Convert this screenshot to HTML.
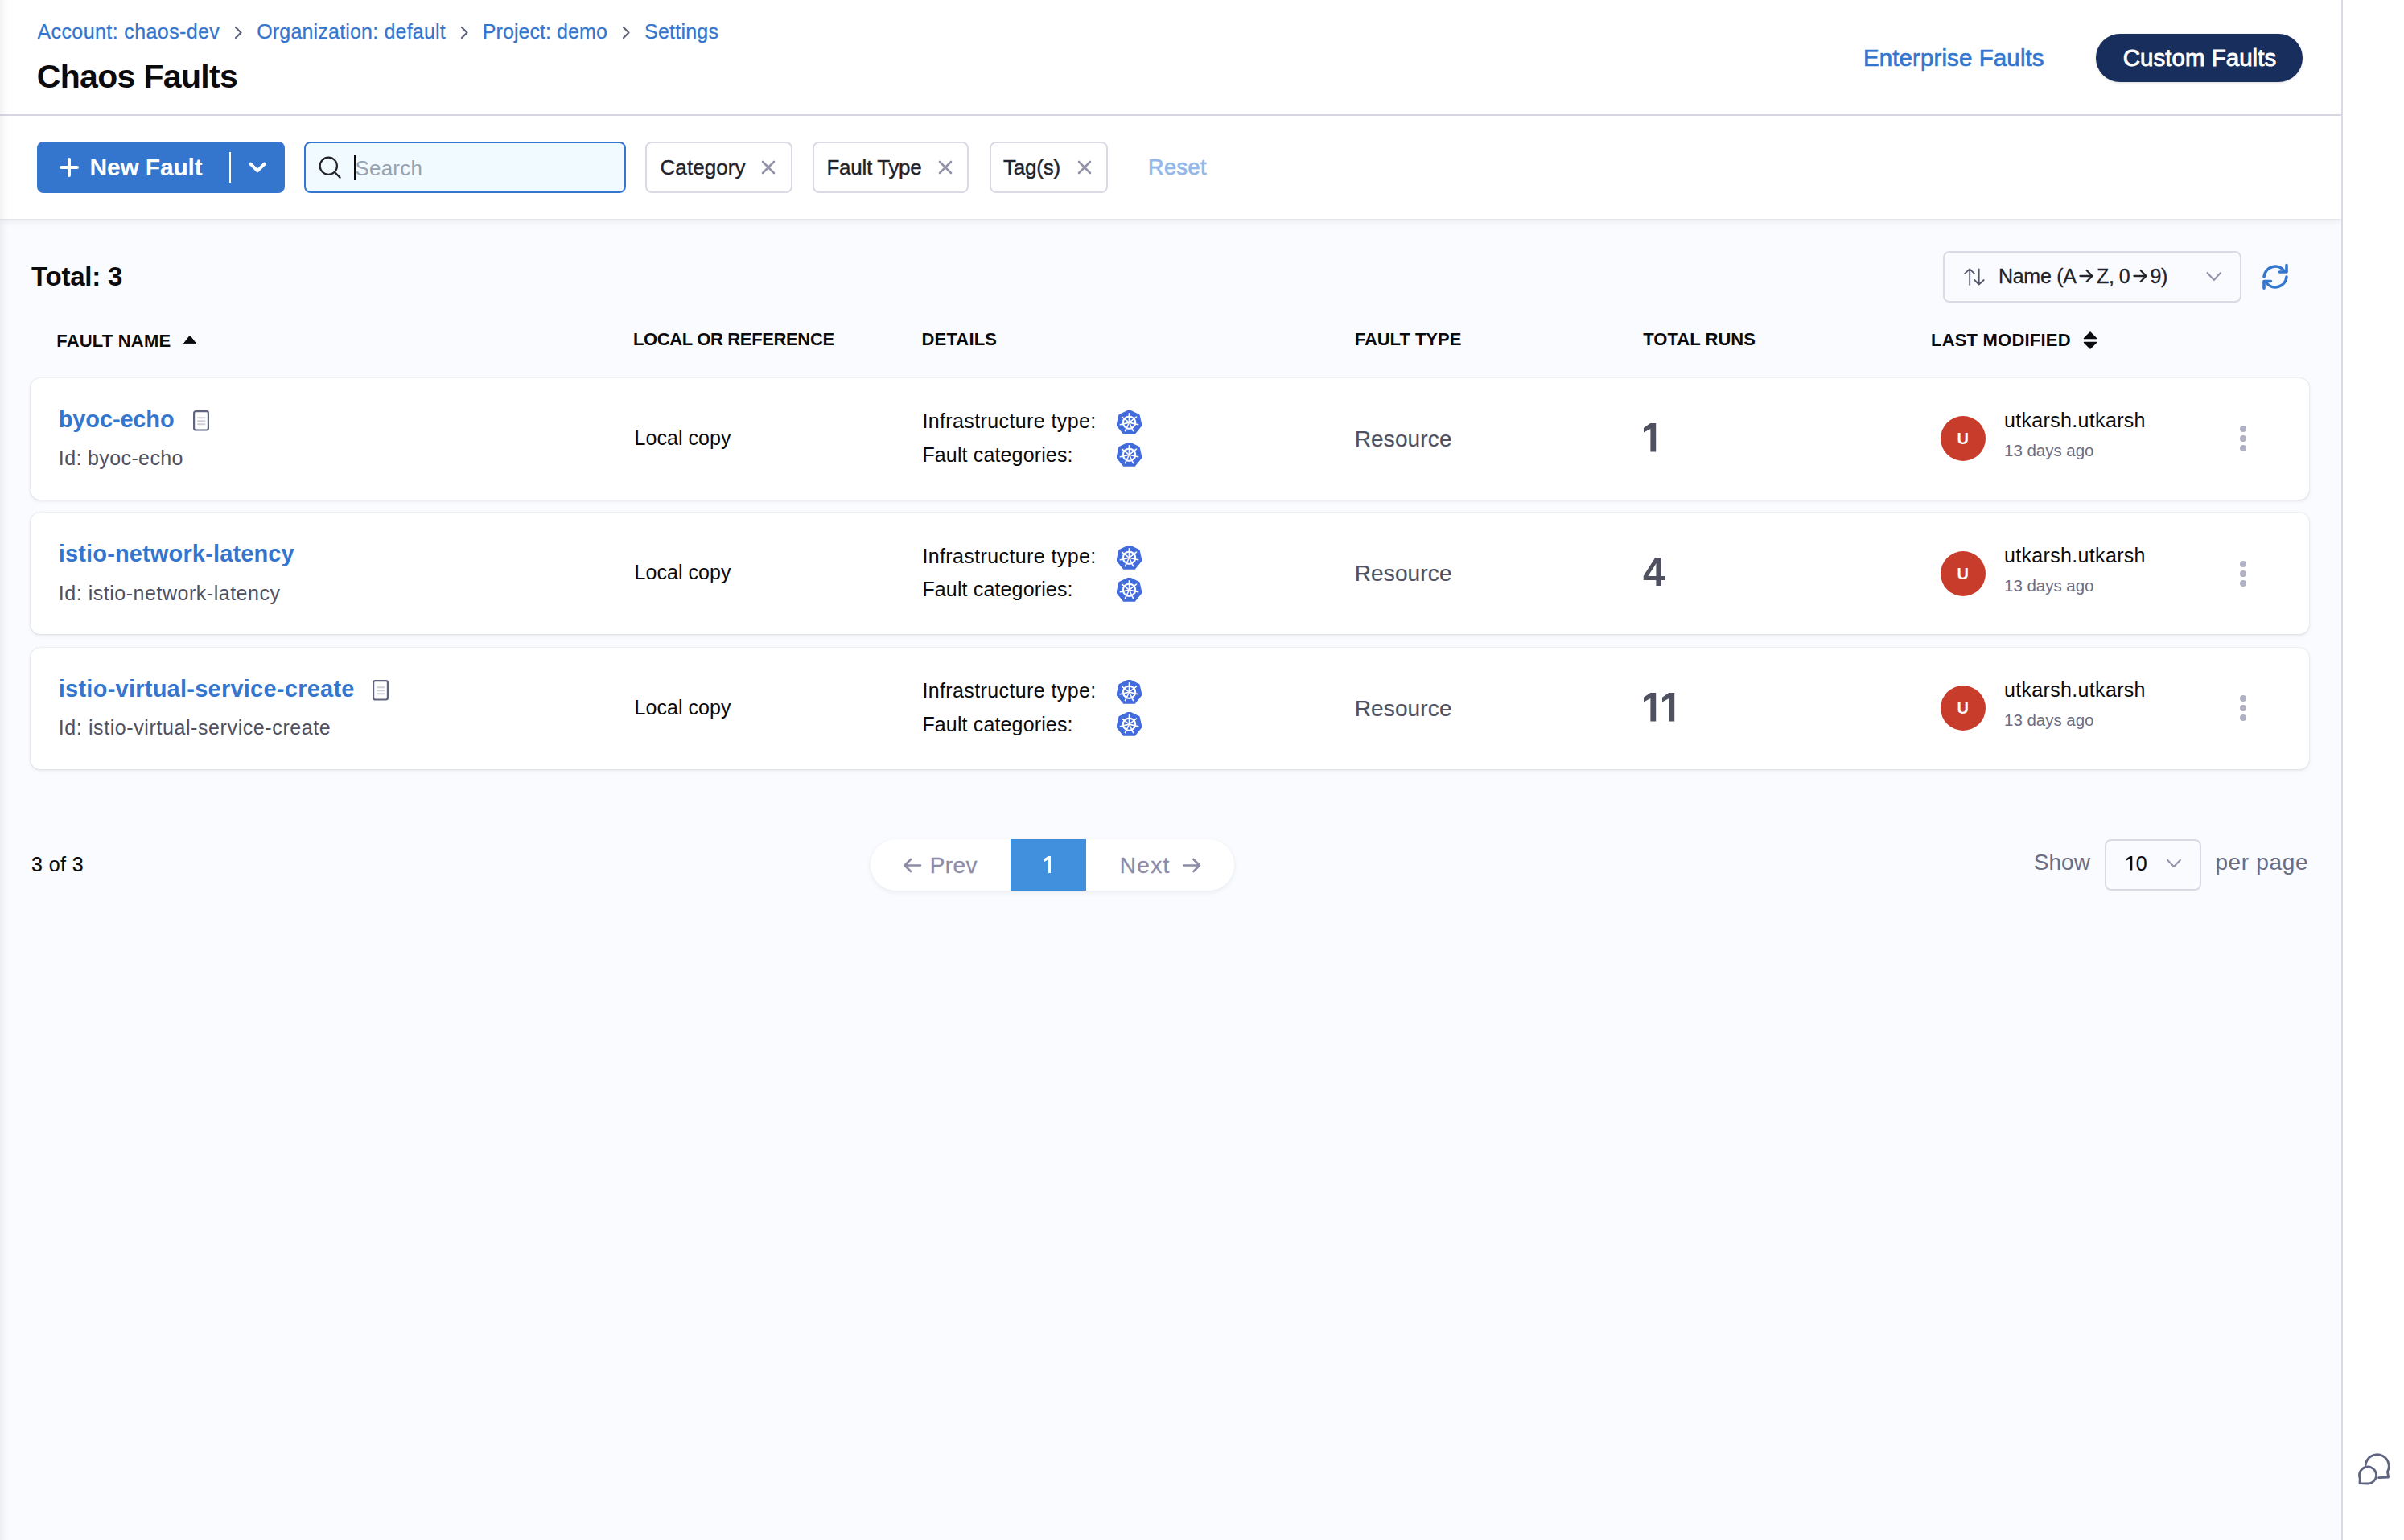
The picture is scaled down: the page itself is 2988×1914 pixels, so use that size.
<!DOCTYPE html>
<html><head><meta charset="utf-8"><title>Chaos Faults</title>
<style>
html,body{margin:0;padding:0;}
body{width:2988px;height:1914px;position:relative;overflow:hidden;background:#f9fbfe;font-family:"Liberation Sans",sans-serif;}
.t{position:absolute;white-space:nowrap;}
</style></head><body>
<div style="position:absolute;left:0px;top:0px;width:2910px;height:144px;background:#fff;"></div>
<div style="position:absolute;left:0px;top:142px;width:2910px;height:2px;background:#d9dae4;"></div>
<div style="position:absolute;left:0px;top:144px;width:2910px;height:128px;background:#fff;box-shadow:0 1px 2px rgba(40,41,60,0.07),0 3px 8px rgba(40,41,60,0.08);z-index:1;"></div>
<div style="position:absolute;left:2910px;top:0px;width:2px;height:1914px;background:#d9dae4;z-index:3;"></div>
<div style="position:absolute;left:2912px;top:0px;width:76px;height:1914px;background:#fff;z-index:3;"></div>
<div style="position:absolute;left:0px;top:0px;width:12px;height:1914px;background:linear-gradient(to right,rgba(40,41,60,0.06),rgba(40,41,60,0.02) 50%,rgba(40,41,60,0));z-index:4;"></div>
<div class="t" style="left:46.50px;top:26.63px;font-size:25px;line-height:25px;color:#3476ce;letter-spacing:0.400px;-webkit-text-stroke:0.25px #3476ce;">Account: chaos-dev</div>
<div class="t" style="left:319.20px;top:26.63px;font-size:25px;line-height:25px;color:#3476ce;letter-spacing:0.190px;-webkit-text-stroke:0.25px #3476ce;">Organization: default</div>
<div class="t" style="left:599.80px;top:26.63px;font-size:25px;line-height:25px;color:#3476ce;letter-spacing:0.067px;-webkit-text-stroke:0.25px #3476ce;">Project: demo</div>
<div class="t" style="left:801.00px;top:26.63px;font-size:25px;line-height:25px;color:#3476ce;letter-spacing:0.229px;-webkit-text-stroke:0.25px #3476ce;">Settings</div>
<svg style="position:absolute;left:289.5px;top:30px;" width="16" height="20" viewBox="0 0 16 20"><path d="M3 4 L9.5 10.5 L3 17" fill="none" stroke="#60647a" stroke-width="2.3" stroke-linecap="round" stroke-linejoin="round"/></svg>
<svg style="position:absolute;left:570.5px;top:30px;" width="16" height="20" viewBox="0 0 16 20"><path d="M3 4 L9.5 10.5 L3 17" fill="none" stroke="#60647a" stroke-width="2.3" stroke-linecap="round" stroke-linejoin="round"/></svg>
<svg style="position:absolute;left:771.5px;top:30px;" width="16" height="20" viewBox="0 0 16 20"><path d="M3 4 L9.5 10.5 L3 17" fill="none" stroke="#60647a" stroke-width="2.3" stroke-linecap="round" stroke-linejoin="round"/></svg>
<div class="t" style="left:45.80px;top:75.28px;font-size:41px;line-height:41px;color:#0b0b0d;font-weight:700;letter-spacing:-0.673px;">Chaos Faults</div>
<div class="t" style="left:2316.00px;top:57.32px;font-size:29.5px;line-height:29.5px;color:#3476ce;letter-spacing:0.100px;-webkit-text-stroke:0.7px #3476ce;">Enterprise Faults</div>
<div style="position:absolute;left:2605px;top:42px;width:257px;height:60px;background:#182f5d;border-radius:30px;box-shadow:0 1px 3px rgba(0,0,0,0.15);"></div>
<div class="t" style="left:2638.70px;top:57.32px;font-size:29.5px;line-height:29.5px;color:#ffffff;letter-spacing:0.025px;-webkit-text-stroke:0.9px #ffffff;">Custom Faults</div>
<div style="position:absolute;left:46px;top:176px;width:308px;height:64px;background:#3476ce;border-radius:8px;z-index:2;"></div>
<svg style="position:absolute;left:70px;top:192px;z-index:2;" width="32" height="32" viewBox="0 0 32 32"><path d="M16 6 V26 M6 16 H26" stroke="#fff" stroke-width="4" stroke-linecap="round"/></svg>
<div class="t" style="left:111.60px;top:192.90px;font-size:30px;line-height:30px;color:#ffffff;font-weight:700;letter-spacing:-0.200px;z-index:2;">New Fault</div>
<div style="position:absolute;left:285px;top:189px;width:2px;height:38px;background:#fff;z-index:2;"></div>
<svg style="position:absolute;left:306px;top:198px;z-index:2;" width="28" height="20" viewBox="0 0 28 20"><path d="M5.4 5.7 L13.9 14.2 L22.7 5.7" fill="none" stroke="#fff" stroke-width="4" stroke-linecap="round" stroke-linejoin="round"/></svg>
<div style="position:absolute;left:378px;top:176px;width:400px;height:64px;box-sizing:border-box;border:2px solid #3476ce;background:#f1fafe;border-radius:8px;z-index:2;"></div>
<svg style="position:absolute;left:390px;top:188px;z-index:2;" width="40" height="40" viewBox="0 0 40 40"><circle cx="18.3" cy="18.2" r="10.6" fill="none" stroke="#22222a" stroke-width="2.2"/><path d="M26.3 26.3 L32.6 32.6" stroke="#22222a" stroke-width="2.2" stroke-linecap="round"/></svg>
<div style="position:absolute;left:439.8px;top:193px;width:2.3000000000000114px;height:31px;background:#0b0b0d;z-index:2;"></div>
<div class="t" style="left:441.50px;top:196.28px;font-size:26px;line-height:26px;color:#98a3b0;letter-spacing:0.200px;z-index:2;">Search</div>
<div style="position:absolute;left:802px;top:176px;width:183px;height:64px;box-sizing:border-box;border:2px solid #d9dae4;background:#fff;border-radius:8px;z-index:2;"></div>
<div class="t" style="left:820.50px;top:195.28px;font-size:26px;line-height:26px;color:#22222a;letter-spacing:0.071px;-webkit-text-stroke:0.4px #22222a;z-index:2;">Category</div>
<svg style="position:absolute;left:945px;top:198px;z-index:2;" width="20" height="20" viewBox="0 0 20 20"><path d="M3 3 L17 17 M17 3 L3 17" stroke="#9293a9" stroke-width="2.6" stroke-linecap="round"/></svg>
<div style="position:absolute;left:1010px;top:176px;width:194px;height:64px;box-sizing:border-box;border:2px solid #d9dae4;background:#fff;border-radius:8px;z-index:2;"></div>
<div class="t" style="left:1027.50px;top:195.28px;font-size:26px;line-height:26px;color:#22222a;letter-spacing:-0.300px;-webkit-text-stroke:0.4px #22222a;z-index:2;">Fault Type</div>
<svg style="position:absolute;left:1165px;top:198px;z-index:2;" width="20" height="20" viewBox="0 0 20 20"><path d="M3 3 L17 17 M17 3 L3 17" stroke="#9293a9" stroke-width="2.6" stroke-linecap="round"/></svg>
<div style="position:absolute;left:1230px;top:176px;width:147px;height:64px;box-sizing:border-box;border:2px solid #d9dae4;background:#fff;border-radius:8px;z-index:2;"></div>
<div class="t" style="left:1247.00px;top:195.28px;font-size:26px;line-height:26px;color:#22222a;letter-spacing:-0.200px;-webkit-text-stroke:0.4px #22222a;z-index:2;">Tag(s)</div>
<svg style="position:absolute;left:1338px;top:198px;z-index:2;" width="20" height="20" viewBox="0 0 20 20"><path d="M3 3 L17 17 M17 3 L3 17" stroke="#9293a9" stroke-width="2.6" stroke-linecap="round"/></svg>
<div class="t" style="left:1427.00px;top:195.34px;font-size:27px;line-height:27px;color:#92b7e8;letter-spacing:0.500px;-webkit-text-stroke:0.7px #92b7e8;z-index:2;">Reset</div>
<div style="position:absolute;left:0px;top:272px;width:2910px;height:1642px;background:#f9fbfe;"></div>
<div class="t" style="left:39.00px;top:327.26px;font-size:33px;line-height:33px;color:#0b0b0d;font-weight:700;letter-spacing:-0.214px;">Total: 3</div>
<div style="position:absolute;left:2415px;top:312px;width:371px;height:64px;box-sizing:border-box;border:2px solid #d9dae4;background:#f9fbfe;border-radius:8px;"></div>
<svg style="position:absolute;left:2436px;top:328px;" width="36" height="32" viewBox="0 0 36 32"><path d="M12.2 26 V6.3 M6.2 11.8 L12.2 6.3 L17.9 11.8 M23.7 6.3 V25.5 M18.2 20 L23.7 25.5 L29.7 20" fill="none" stroke="#55586b" stroke-width="1.8" stroke-linecap="round" stroke-linejoin="round"/></svg>
<div class="t" style="left:2484.00px;top:330.83px;font-size:25px;line-height:25px;color:#22222a;letter-spacing:-0.300px;-webkit-text-stroke:0.3px #22222a;">Name (A</div>
<div class="t" style="left:2606.10px;top:330.83px;font-size:25px;line-height:25px;color:#22222a;letter-spacing:-0.467px;-webkit-text-stroke:0.3px #22222a;">Z, 0</div>
<div class="t" style="left:2672.60px;top:330.83px;font-size:25px;line-height:25px;color:#22222a;letter-spacing:-0.500px;-webkit-text-stroke:0.3px #22222a;">9)</div>
<svg style="position:absolute;left:2583px;top:333px;" width="22" height="20" viewBox="0 0 22 20"><path d="M2.5 10 H17.5 M10.6 3 L17.5 10 L10.6 17" fill="none" stroke="#22222a" stroke-width="2.3" stroke-linecap="round" stroke-linejoin="round"/></svg>
<svg style="position:absolute;left:2649.6px;top:333px;" width="22" height="20" viewBox="0 0 22 20"><path d="M2.5 10 H17.5 M10.6 3 L17.5 10 L10.6 17" fill="none" stroke="#22222a" stroke-width="2.3" stroke-linecap="round" stroke-linejoin="round"/></svg>
<svg style="position:absolute;left:2738px;top:332px;" width="28" height="24" viewBox="0 0 28 24"><path d="M5.5 7 L13.8 16 L22 7" fill="none" stroke="#9293a9" stroke-width="2" stroke-linecap="round" stroke-linejoin="round"/></svg>
<svg style="position:absolute;left:2800px;top:315px;" width="60" height="60" viewBox="0 0 60 60"><path d="M14 29 A14 14 0 0 1 39 21.5" fill="none" stroke="#3476ce" stroke-width="3.6" stroke-linecap="round"/><path d="M42 14.5 V23 H33.6" fill="none" stroke="#3476ce" stroke-width="3.6" stroke-linecap="round" stroke-linejoin="round"/><path d="M42 29 A14 14 0 0 1 17 36.5" fill="none" stroke="#3476ce" stroke-width="3.6" stroke-linecap="round"/><path d="M14 43.2 V34.5 H22.5" fill="none" stroke="#3476ce" stroke-width="3.6" stroke-linecap="round" stroke-linejoin="round"/></svg>
<div class="t" style="left:70.30px;top:412.77px;font-size:22px;line-height:22px;color:#0b0b0d;font-weight:700;letter-spacing:0.189px;">FAULT NAME</div>
<svg style="position:absolute;left:226px;top:414px;" width="20" height="16" viewBox="0 0 20 16"><path d="M2.5 12.8 L10 3 L17.5 12.8 Z" fill="#0b0b0d" stroke="#0b0b0d" stroke-width="1" stroke-linejoin="round"/></svg>
<div class="t" style="left:787.00px;top:411.37px;font-size:22px;line-height:22px;color:#0b0b0d;font-weight:700;letter-spacing:-0.365px;">LOCAL OR REFERENCE</div>
<div class="t" style="left:1145.50px;top:411.37px;font-size:22px;line-height:22px;color:#0b0b0d;font-weight:700;letter-spacing:0.167px;">DETAILS</div>
<div class="t" style="left:1683.70px;top:410.87px;font-size:22px;line-height:22px;color:#0b0b0d;font-weight:700;letter-spacing:-0.022px;">FAULT TYPE</div>
<div class="t" style="left:2042.30px;top:410.87px;font-size:22px;line-height:22px;color:#0b0b0d;font-weight:700;letter-spacing:0.033px;">TOTAL RUNS</div>
<div class="t" style="left:2400.00px;top:412.37px;font-size:22px;line-height:22px;color:#0b0b0d;font-weight:700;letter-spacing:0.208px;">LAST MODIFIED</div>
<svg style="position:absolute;left:2586px;top:410px;" width="24" height="26" viewBox="0 0 24 26"><path d="M4.5 10.5 L12 3 L19.5 10.5 Z M4.5 15.5 L12 23 L19.5 15.5 Z" fill="#0b0b0d" stroke="#0b0b0d" stroke-width="1.5" stroke-linejoin="round"/></svg>
<div style="position:absolute;left:37.5px;top:469.8px;width:2832.0px;height:151.2px;background:#fff;border-radius:12px;box-shadow:0 0 1.5px rgba(40,41,61,0.22),0 2px 4px rgba(96,97,112,0.12);"></div>
<div class="t" style="left:72.80px;top:506.94px;font-size:29px;line-height:29px;color:#3476ce;font-weight:700;letter-spacing:-0.150px;">byoc-echo</div>
<svg style="position:absolute;left:239px;top:509px;" width="22" height="28" viewBox="0 0 22 28"><rect x="2.1" y="2.1" width="17.8" height="23.4" rx="2.2" fill="#fff" stroke="#60647e" stroke-width="2.2"/><path d="M7 10.3 H15.5 M7 14.3 H15.5 M7 18.3 H15.5" stroke="#cdced6" stroke-width="1.9" stroke-linecap="round"/></svg>
<div class="t" style="left:72.80px;top:557.33px;font-size:25px;line-height:25px;color:#4f5161;letter-spacing:0.383px;">Id: byoc-echo</div>
<div class="t" style="left:788.50px;top:531.63px;font-size:25px;line-height:25px;color:#0b0b0d;letter-spacing:0.056px;">Local copy</div>
<div class="t" style="left:1146.40px;top:511.23px;font-size:25px;line-height:25px;color:#0b0b0d;letter-spacing:0.389px;">Infrastructure type:</div>
<div class="t" style="left:1146.40px;top:552.63px;font-size:25px;line-height:25px;color:#0b0b0d;letter-spacing:0.144px;">Fault categories:</div>
<svg style="position:absolute;left:1387.5px;top:510px;" width="31" height="31" viewBox="0 0 31 31"><polygon points="15.50,0.11 27.54,5.79 30.51,18.56 22.18,28.80 8.82,28.80 0.49,18.56 3.46,5.79" fill="#426bdc" stroke="#426bdc" stroke-width="2" stroke-linejoin="round"/><circle cx="15.5" cy="15.2" r="7.6" fill="none" stroke="#fff" stroke-width="2.2"/><path d="M15.50 13.20 L15.50 3.70" stroke="#fff" stroke-width="1.6" stroke-linecap="round"/><path d="M17.06 13.95 L24.49 8.03" stroke="#fff" stroke-width="1.6" stroke-linecap="round"/><path d="M17.45 15.65 L26.71 17.76" stroke="#fff" stroke-width="1.6" stroke-linecap="round"/><path d="M16.37 17.00 L20.49 25.56" stroke="#fff" stroke-width="1.6" stroke-linecap="round"/><path d="M14.63 17.00 L10.51 25.56" stroke="#fff" stroke-width="1.6" stroke-linecap="round"/><path d="M13.55 15.65 L4.29 17.76" stroke="#fff" stroke-width="1.6" stroke-linecap="round"/><path d="M13.94 13.95 L6.51 8.03" stroke="#fff" stroke-width="1.6" stroke-linecap="round"/><circle cx="15.5" cy="15.2" r="1.6" fill="#fff"/></svg>
<svg style="position:absolute;left:1387.5px;top:550px;" width="31" height="31" viewBox="0 0 31 31"><polygon points="15.50,0.11 27.54,5.79 30.51,18.56 22.18,28.80 8.82,28.80 0.49,18.56 3.46,5.79" fill="#426bdc" stroke="#426bdc" stroke-width="2" stroke-linejoin="round"/><circle cx="15.5" cy="15.2" r="7.6" fill="none" stroke="#fff" stroke-width="2.2"/><path d="M15.50 13.20 L15.50 3.70" stroke="#fff" stroke-width="1.6" stroke-linecap="round"/><path d="M17.06 13.95 L24.49 8.03" stroke="#fff" stroke-width="1.6" stroke-linecap="round"/><path d="M17.45 15.65 L26.71 17.76" stroke="#fff" stroke-width="1.6" stroke-linecap="round"/><path d="M16.37 17.00 L20.49 25.56" stroke="#fff" stroke-width="1.6" stroke-linecap="round"/><path d="M14.63 17.00 L10.51 25.56" stroke="#fff" stroke-width="1.6" stroke-linecap="round"/><path d="M13.55 15.65 L4.29 17.76" stroke="#fff" stroke-width="1.6" stroke-linecap="round"/><path d="M13.94 13.95 L6.51 8.03" stroke="#fff" stroke-width="1.6" stroke-linecap="round"/><circle cx="15.5" cy="15.2" r="1.6" fill="#fff"/></svg>
<div class="t" style="left:1683.70px;top:531.69px;font-size:28px;line-height:28px;color:#4f5161;letter-spacing:0.143px;-webkit-text-stroke:0.2px #4f5161;">Resource</div>
<svg style="position:absolute;left:2042.7px;top:526.4px;" width="17" height="37" viewBox="0 0 17 37"><polygon points="0,5.8 8.2,0 15.2,0 15.2,35.4 8.4,35.4 8.4,6.9 0,11.5" fill="#4f5161"/></svg>
<div style="position:absolute;left:2412px;top:517px;width:56px;height:56px;background:#c83c2c;border-radius:50%;"></div>
<div class="t" style="left:2432.50px;top:535.36px;font-size:20px;line-height:20px;color:#fff;font-weight:700;">U</div>
<div class="t" style="left:2491.00px;top:510.03px;font-size:25px;line-height:25px;color:#0b0b0d;letter-spacing:0.329px;">utkarsh.utkarsh</div>
<div class="t" style="left:2491.00px;top:550.44px;font-size:20.5px;line-height:20.5px;color:#6b6d83;letter-spacing:-0.020px;">13 days ago</div>
<div style="position:absolute;left:2784px;top:529px;width:8px;height:8px;background:#b0b1c2;border-radius:50%;"></div>
<div style="position:absolute;left:2784px;top:541px;width:8px;height:8px;background:#b0b1c2;border-radius:50%;"></div>
<div style="position:absolute;left:2784px;top:553px;width:8px;height:8px;background:#b0b1c2;border-radius:50%;"></div>
<div style="position:absolute;left:37.5px;top:637.3px;width:2832.0px;height:151.20000000000005px;background:#fff;border-radius:12px;box-shadow:0 0 1.5px rgba(40,41,61,0.22),0 2px 4px rgba(96,97,112,0.12);"></div>
<div class="t" style="left:72.80px;top:674.44px;font-size:29px;line-height:29px;color:#3476ce;font-weight:700;letter-spacing:0.145px;">istio-network-latency</div>
<div class="t" style="left:72.80px;top:724.83px;font-size:25px;line-height:25px;color:#4f5161;letter-spacing:0.525px;">Id: istio-network-latency</div>
<div class="t" style="left:788.50px;top:699.13px;font-size:25px;line-height:25px;color:#0b0b0d;letter-spacing:0.056px;">Local copy</div>
<div class="t" style="left:1146.40px;top:678.73px;font-size:25px;line-height:25px;color:#0b0b0d;letter-spacing:0.389px;">Infrastructure type:</div>
<div class="t" style="left:1146.40px;top:720.13px;font-size:25px;line-height:25px;color:#0b0b0d;letter-spacing:0.144px;">Fault categories:</div>
<svg style="position:absolute;left:1387.5px;top:677.5px;" width="31" height="31" viewBox="0 0 31 31"><polygon points="15.50,0.11 27.54,5.79 30.51,18.56 22.18,28.80 8.82,28.80 0.49,18.56 3.46,5.79" fill="#426bdc" stroke="#426bdc" stroke-width="2" stroke-linejoin="round"/><circle cx="15.5" cy="15.2" r="7.6" fill="none" stroke="#fff" stroke-width="2.2"/><path d="M15.50 13.20 L15.50 3.70" stroke="#fff" stroke-width="1.6" stroke-linecap="round"/><path d="M17.06 13.95 L24.49 8.03" stroke="#fff" stroke-width="1.6" stroke-linecap="round"/><path d="M17.45 15.65 L26.71 17.76" stroke="#fff" stroke-width="1.6" stroke-linecap="round"/><path d="M16.37 17.00 L20.49 25.56" stroke="#fff" stroke-width="1.6" stroke-linecap="round"/><path d="M14.63 17.00 L10.51 25.56" stroke="#fff" stroke-width="1.6" stroke-linecap="round"/><path d="M13.55 15.65 L4.29 17.76" stroke="#fff" stroke-width="1.6" stroke-linecap="round"/><path d="M13.94 13.95 L6.51 8.03" stroke="#fff" stroke-width="1.6" stroke-linecap="round"/><circle cx="15.5" cy="15.2" r="1.6" fill="#fff"/></svg>
<svg style="position:absolute;left:1387.5px;top:717.5px;" width="31" height="31" viewBox="0 0 31 31"><polygon points="15.50,0.11 27.54,5.79 30.51,18.56 22.18,28.80 8.82,28.80 0.49,18.56 3.46,5.79" fill="#426bdc" stroke="#426bdc" stroke-width="2" stroke-linejoin="round"/><circle cx="15.5" cy="15.2" r="7.6" fill="none" stroke="#fff" stroke-width="2.2"/><path d="M15.50 13.20 L15.50 3.70" stroke="#fff" stroke-width="1.6" stroke-linecap="round"/><path d="M17.06 13.95 L24.49 8.03" stroke="#fff" stroke-width="1.6" stroke-linecap="round"/><path d="M17.45 15.65 L26.71 17.76" stroke="#fff" stroke-width="1.6" stroke-linecap="round"/><path d="M16.37 17.00 L20.49 25.56" stroke="#fff" stroke-width="1.6" stroke-linecap="round"/><path d="M14.63 17.00 L10.51 25.56" stroke="#fff" stroke-width="1.6" stroke-linecap="round"/><path d="M13.55 15.65 L4.29 17.76" stroke="#fff" stroke-width="1.6" stroke-linecap="round"/><path d="M13.94 13.95 L6.51 8.03" stroke="#fff" stroke-width="1.6" stroke-linecap="round"/><circle cx="15.5" cy="15.2" r="1.6" fill="#fff"/></svg>
<div class="t" style="left:1683.70px;top:699.19px;font-size:28px;line-height:28px;color:#4f5161;letter-spacing:0.143px;-webkit-text-stroke:0.2px #4f5161;">Resource</div>
<div class="t" style="left:2041.90px;top:686.46px;font-size:50px;line-height:50px;color:#4f5161;font-weight:700;">4</div>
<div style="position:absolute;left:2412px;top:684.5px;width:56px;height:56.0px;background:#c83c2c;border-radius:50%;"></div>
<div class="t" style="left:2432.50px;top:702.86px;font-size:20px;line-height:20px;color:#fff;font-weight:700;">U</div>
<div class="t" style="left:2491.00px;top:677.53px;font-size:25px;line-height:25px;color:#0b0b0d;letter-spacing:0.329px;">utkarsh.utkarsh</div>
<div class="t" style="left:2491.00px;top:717.94px;font-size:20.5px;line-height:20.5px;color:#6b6d83;letter-spacing:-0.020px;">13 days ago</div>
<div style="position:absolute;left:2784px;top:696.5px;width:8px;height:8.0px;background:#b0b1c2;border-radius:50%;"></div>
<div style="position:absolute;left:2784px;top:708.5px;width:8px;height:8.0px;background:#b0b1c2;border-radius:50%;"></div>
<div style="position:absolute;left:2784px;top:720.5px;width:8px;height:8.0px;background:#b0b1c2;border-radius:50%;"></div>
<div style="position:absolute;left:37.5px;top:804.8px;width:2832.0px;height:151.20000000000005px;background:#fff;border-radius:12px;box-shadow:0 0 1.5px rgba(40,41,61,0.22),0 2px 4px rgba(96,97,112,0.12);"></div>
<div class="t" style="left:72.80px;top:841.94px;font-size:29px;line-height:29px;color:#3476ce;font-weight:700;letter-spacing:0.244px;">istio-virtual-service-create</div>
<svg style="position:absolute;left:462px;top:844px;" width="22" height="28" viewBox="0 0 22 28"><rect x="2.1" y="2.1" width="17.8" height="23.4" rx="2.2" fill="#fff" stroke="#60647e" stroke-width="2.2"/><path d="M7 10.3 H15.5 M7 14.3 H15.5 M7 18.3 H15.5" stroke="#cdced6" stroke-width="1.9" stroke-linecap="round"/></svg>
<div class="t" style="left:72.80px;top:892.33px;font-size:25px;line-height:25px;color:#4f5161;letter-spacing:0.594px;">Id: istio-virtual-service-create</div>
<div class="t" style="left:788.50px;top:866.63px;font-size:25px;line-height:25px;color:#0b0b0d;letter-spacing:0.056px;">Local copy</div>
<div class="t" style="left:1146.40px;top:846.23px;font-size:25px;line-height:25px;color:#0b0b0d;letter-spacing:0.389px;">Infrastructure type:</div>
<div class="t" style="left:1146.40px;top:887.63px;font-size:25px;line-height:25px;color:#0b0b0d;letter-spacing:0.144px;">Fault categories:</div>
<svg style="position:absolute;left:1387.5px;top:845px;" width="31" height="31" viewBox="0 0 31 31"><polygon points="15.50,0.11 27.54,5.79 30.51,18.56 22.18,28.80 8.82,28.80 0.49,18.56 3.46,5.79" fill="#426bdc" stroke="#426bdc" stroke-width="2" stroke-linejoin="round"/><circle cx="15.5" cy="15.2" r="7.6" fill="none" stroke="#fff" stroke-width="2.2"/><path d="M15.50 13.20 L15.50 3.70" stroke="#fff" stroke-width="1.6" stroke-linecap="round"/><path d="M17.06 13.95 L24.49 8.03" stroke="#fff" stroke-width="1.6" stroke-linecap="round"/><path d="M17.45 15.65 L26.71 17.76" stroke="#fff" stroke-width="1.6" stroke-linecap="round"/><path d="M16.37 17.00 L20.49 25.56" stroke="#fff" stroke-width="1.6" stroke-linecap="round"/><path d="M14.63 17.00 L10.51 25.56" stroke="#fff" stroke-width="1.6" stroke-linecap="round"/><path d="M13.55 15.65 L4.29 17.76" stroke="#fff" stroke-width="1.6" stroke-linecap="round"/><path d="M13.94 13.95 L6.51 8.03" stroke="#fff" stroke-width="1.6" stroke-linecap="round"/><circle cx="15.5" cy="15.2" r="1.6" fill="#fff"/></svg>
<svg style="position:absolute;left:1387.5px;top:885px;" width="31" height="31" viewBox="0 0 31 31"><polygon points="15.50,0.11 27.54,5.79 30.51,18.56 22.18,28.80 8.82,28.80 0.49,18.56 3.46,5.79" fill="#426bdc" stroke="#426bdc" stroke-width="2" stroke-linejoin="round"/><circle cx="15.5" cy="15.2" r="7.6" fill="none" stroke="#fff" stroke-width="2.2"/><path d="M15.50 13.20 L15.50 3.70" stroke="#fff" stroke-width="1.6" stroke-linecap="round"/><path d="M17.06 13.95 L24.49 8.03" stroke="#fff" stroke-width="1.6" stroke-linecap="round"/><path d="M17.45 15.65 L26.71 17.76" stroke="#fff" stroke-width="1.6" stroke-linecap="round"/><path d="M16.37 17.00 L20.49 25.56" stroke="#fff" stroke-width="1.6" stroke-linecap="round"/><path d="M14.63 17.00 L10.51 25.56" stroke="#fff" stroke-width="1.6" stroke-linecap="round"/><path d="M13.55 15.65 L4.29 17.76" stroke="#fff" stroke-width="1.6" stroke-linecap="round"/><path d="M13.94 13.95 L6.51 8.03" stroke="#fff" stroke-width="1.6" stroke-linecap="round"/><circle cx="15.5" cy="15.2" r="1.6" fill="#fff"/></svg>
<div class="t" style="left:1683.70px;top:866.69px;font-size:28px;line-height:28px;color:#4f5161;letter-spacing:0.143px;-webkit-text-stroke:0.2px #4f5161;">Resource</div>
<svg style="position:absolute;left:2042.7px;top:861.4px;" width="17" height="37" viewBox="0 0 17 37"><polygon points="0,5.8 8.2,0 15.2,0 15.2,35.4 8.4,35.4 8.4,6.9 0,11.5" fill="#4f5161"/></svg>
<svg style="position:absolute;left:2065.6px;top:861.4px;" width="17" height="37" viewBox="0 0 17 37"><polygon points="0,5.8 8.2,0 15.2,0 15.2,35.4 8.4,35.4 8.4,6.9 0,11.5" fill="#4f5161"/></svg>
<div style="position:absolute;left:2412px;top:852px;width:56px;height:56px;background:#c83c2c;border-radius:50%;"></div>
<div class="t" style="left:2432.50px;top:870.36px;font-size:20px;line-height:20px;color:#fff;font-weight:700;">U</div>
<div class="t" style="left:2491.00px;top:845.03px;font-size:25px;line-height:25px;color:#0b0b0d;letter-spacing:0.329px;">utkarsh.utkarsh</div>
<div class="t" style="left:2491.00px;top:885.44px;font-size:20.5px;line-height:20.5px;color:#6b6d83;letter-spacing:-0.020px;">13 days ago</div>
<div style="position:absolute;left:2784px;top:864px;width:8px;height:8px;background:#b0b1c2;border-radius:50%;"></div>
<div style="position:absolute;left:2784px;top:876px;width:8px;height:8px;background:#b0b1c2;border-radius:50%;"></div>
<div style="position:absolute;left:2784px;top:888px;width:8px;height:8px;background:#b0b1c2;border-radius:50%;"></div>
<div class="t" style="left:39.00px;top:1061.83px;font-size:25px;line-height:25px;color:#0b0b0d;letter-spacing:0.400px;-webkit-text-stroke:0.2px #0b0b0d;">3 of 3</div>
<div style="position:absolute;left:1082px;top:1043px;width:452px;height:64px;background:#fff;border-radius:32px;box-shadow:0 2px 6px rgba(30,35,70,0.08);overflow:hidden;"></div>
<div style="position:absolute;left:1256px;top:1043px;width:94px;height:64px;background:#4090de;"></div>
<svg style="position:absolute;left:1120px;top:1061.5px;" width="28" height="28" viewBox="0 0 28 28"><path d="M24 13.5 H4.5 M12 6 L4.5 13.5 L12 21" fill="none" stroke="#8c8ca6" stroke-width="2.6" stroke-linecap="round" stroke-linejoin="round"/></svg>
<div class="t" style="left:1155.70px;top:1062.29px;font-size:28px;line-height:28px;color:#8c8ca6;letter-spacing:0.433px;-webkit-text-stroke:0.3px #8c8ca6;">Prev</div>
<svg style="position:absolute;left:1298px;top:1063.8px;" width="9" height="22" viewBox="0 0 9 22"><polygon points="0,3.2 4.9,0 8,0 8,21.1 4.9,21.1 4.9,4.2 0,6.9" fill="#fff"/></svg>
<div class="t" style="left:1391.70px;top:1062.29px;font-size:28px;line-height:28px;color:#8c8ca6;letter-spacing:1.333px;-webkit-text-stroke:0.3px #8c8ca6;">Next</div>
<svg style="position:absolute;left:1468px;top:1061.5px;" width="28" height="28" viewBox="0 0 28 28"><path d="M3.5 13.5 H23 M15.5 6 L23 13.5 L15.5 21" fill="none" stroke="#8c8ca6" stroke-width="2.6" stroke-linecap="round" stroke-linejoin="round"/></svg>
<div class="t" style="left:2527.80px;top:1058.29px;font-size:28px;line-height:28px;color:#6b6d83;letter-spacing:0.033px;">Show</div>
<div style="position:absolute;left:2616px;top:1043px;width:120px;height:64px;box-sizing:border-box;border:2px solid #d9dae4;background:#f9fbfe;border-radius:8px;"></div>
<svg style="position:absolute;left:2642.8px;top:1064.2px;" width="8" height="18" viewBox="0 0 8 18"><polygon points="0,3 4.6,0 7.3,0 7.3,17.4 4.8,17.4 4.8,3.1 0,5.6" fill="#0b0b0d"/></svg>
<div class="t" style="left:2654.80px;top:1060.83px;font-size:25px;line-height:25px;color:#0b0b0d;-webkit-text-stroke:0.2px #0b0b0d;">0</div>
<svg style="position:absolute;left:2690px;top:1064px;" width="24" height="20" viewBox="0 0 24 20"><path d="M4 4.8 L12 13 L20 4.8" fill="none" stroke="#9293a9" stroke-width="2" stroke-linecap="round" stroke-linejoin="round"/></svg>
<div class="t" style="left:2753.40px;top:1058.29px;font-size:28px;line-height:28px;color:#6b6d83;letter-spacing:0.657px;">per page</div>
<svg style="position:absolute;left:2930px;top:1800px;z-index:5;" width="50" height="50" viewBox="0 0 50 50"><path d="M10.3 20.5 A14.5 14.5 0 1 1 37.5 29 L38.6 36 L26.5 36.6" fill="none" stroke="#5f6480" stroke-width="2.8" stroke-linecap="round" stroke-linejoin="round"/><path d="M13 44 A10.5 10.5 0 1 0 3.2 37.3 L3 43.6 Z" fill="none" stroke="#5f6480" stroke-width="2.8" stroke-linejoin="round"/></svg>
</body></html>
